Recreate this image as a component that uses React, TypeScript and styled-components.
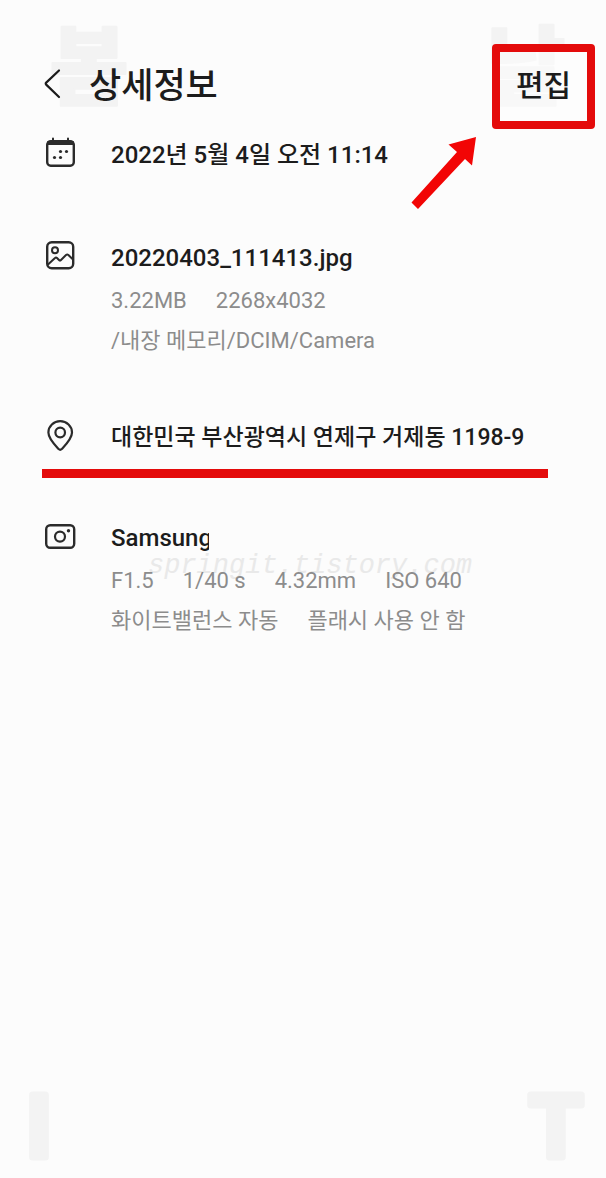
import React from 'react';
import styled, { createGlobalStyle } from 'styled-components';

const GlobalStyle = createGlobalStyle`
  * { box-sizing: border-box; }
  body {
    margin: 0;
    background: #fcfcfc;
    color: #1c1c1c;
    font-family: Roboto, "Noto Sans CJK KR", sans-serif;
  }
`;

const Page = styled.main`
  position: relative;
  isolation: isolate;
  min-height: 100vh;
  padding-top: 44px;
`;

const Watermark = styled.div`
  position: absolute;
  inset: 0;
  z-index: -1;
  display: flex;
  flex-direction: column;
  justify-content: space-between;
  padding: 26px 21px 18px 30px;
  pointer-events: none;
`;

const WatermarkRow = styled.div<{ $inset?: number }>`
  display: flex;
  justify-content: space-between;
  padding: 0 ${(p) => p.$inset ?? 0}px;
`;

const Glyph = styled.svg<{ $size: number; $weight: number; $round: number }>`
  overflow: visible;
  fill: #f3f3f3;
  stroke: #f3f3f3;
  stroke-width: ${(p) => p.$round};
  stroke-linejoin: round;
  font-size: ${(p) => p.$size}px;
  font-weight: ${(p) => p.$weight};
  text-anchor: middle;
`;

const Header = styled.header`
  position: relative;
  display: flex;
  align-items: center;
  height: 85px;
  padding: 0 11px 0 42px;
`;

const BackButton = styled.button`
  display: flex;
  padding: 0 0 6px;
  border: 0;
  background: none;
  color: inherit;
  cursor: pointer;
`;

const Title = styled.h1`
  flex: 1;
  margin: 0 0 0 23px;
  font-size: 35px;
  font-weight: 500;
  line-height: 48px;
`;

const EditButton = styled.button`
  width: 103px;
  height: 85px;
  padding: 0 0 8px;
  border: 8px solid #e40b0b;
  border-radius: 4px;
  background: rgba(255, 255, 255, 0.4);
  color: inherit;
  font-family: inherit;
  font-size: 30px;
  font-weight: 500;
  cursor: pointer;
`;

const Arrow = styled.svg`
  position: absolute;
  top: 92px;
  right: 129px;
  width: 66px;
  height: 74px;
`;

const List = styled.ul`
  margin: 0;
  padding: 8px 58px 0 42px;
  list-style: none;
`;

const Item = styled.li<{ $gap: number; $marked?: boolean }>`
  position: relative;
  display: flex;
  gap: 33px;
  margin-bottom: ${(p) => p.$gap}px;
  padding-bottom: ${(p) => (p.$marked ? 13 : 0)}px;
  border-bottom: ${(p) => (p.$marked ? '9px solid #e40b0b' : '0')};
`;

const Icon = styled.svg`
  flex: none;
  width: 36px;
  height: 32px;
  fill: none;
  stroke: #2b2b2b;
  stroke-width: 2.4;
  stroke-linecap: round;
  stroke-linejoin: round;
`;

const Primary = styled.h2<{ $size?: number }>`
  margin: 0;
  font-size: ${(p) => p.$size ?? 24}px;
  font-weight: 500;
  line-height: 36px;
  white-space: nowrap;
`;

const Device = styled(Primary)`
  width: 98px;
  overflow: hidden;
`;

const Details = styled.div`
  margin-top: 5px;
`;

const Line = styled.p`
  display: flex;
  gap: 29px;
  margin: 0;
  color: #8c8c8c;
  font-size: 22px;
  line-height: 40px;
  white-space: nowrap;
`;

const SiteMark = styled.span`
  position: absolute;
  z-index: -1;
  top: 29px;
  left: 106px;
  color: #e9e9e9;
  font: italic 27px/34px "Liberation Mono", monospace;
`;

export default function App() {
  return (
    <Page>
      <GlobalStyle />
      <Watermark aria-hidden="true">
        <WatermarkRow $inset={20}>
          <Glyph $size={86} $weight={900} $round={2} width="78" height="80">
            <text x="39" y="72">봄</text>
          </Glyph>
          <Glyph $size={86} $weight={900} $round={2} width="78" height="80">
            <text x="39" y="72">날</text>
          </Glyph>
        </WatermarkRow>
        <WatermarkRow>
          <Glyph $size={87} $weight={700} $round={7} width="18" height="69">
            <text x="9" y="66">I</text>
          </Glyph>
          <Glyph $size={87} $weight={700} $round={7} width="57" height="69">
            <text x="28" y="66">T</text>
          </Glyph>
        </WatermarkRow>
      </Watermark>

      <Header>
        <BackButton aria-label="뒤로">
          <svg width="24" height="32" viewBox="0 0 24 32" fill="none" stroke="#1c1c1c" strokeWidth="2.2" strokeLinecap="round" strokeLinejoin="round">
            <path d="M17 2.500 4.200 14.600q-1 1 0 2L17 29" />
          </svg>
        </BackButton>
        <Title>상세정보</Title>
        <EditButton>편집</EditButton>
        <Arrow viewBox="0 0 66 74" aria-hidden="true">
          <path d="M65 1 61 29.500 54 23 7 73 0.500 66.500 46 16 37.500 8.500Z" fill="#f20505" />
        </Arrow>
      </Header>

      <List>
        <Item $gap={67}>
          <Icon viewBox="0 0 36 32" aria-hidden="true">
            <rect x="5.200" y="4.200" width="26.600" height="24.600" rx="3.500" />
            <path d="M6 5h25v2H6zM11 1.500v3M26 1.500v3" strokeWidth="2" fill="#2b2b2b" />
            <g fill="#2b2b2b" stroke="none">
              <circle cx="18.500" cy="14.500" r="1.600" />
              <circle cx="24.500" cy="14.500" r="1.600" />
              <circle cx="12.500" cy="20.500" r="1.600" />
              <circle cx="18.500" cy="20.500" r="1.600" />
            </g>
          </Icon>
          <Primary>2022년 5월 4일 오전 11:14</Primary>
        </Item>

        <Item $gap={59}>
          <Icon viewBox="0 0 36 32" aria-hidden="true">
            <rect x="5.200" y="2.200" width="26" height="26" rx="4.500" />
            <circle cx="13" cy="10.200" r="3" strokeWidth="2" />
            <path d="M6 24.500 13 18q1-1 2 0l2 2q1 1 2 0l5-5q1.200-1 2.400 0l4.600 4.500" strokeWidth="2" />
          </Icon>
          <div>
            <Primary>20220403_111413.jpg</Primary>
            <Details>
              <Line>
                <span>3.22MB</span>
                <span>2268x4032</span>
              </Line>
              <Line>/내장 메모리/DCIM/Camera</Line>
            </Details>
          </div>
        </Item>

        <Item $gap={42} $marked>
          <Icon viewBox="0 0 36 32" aria-hidden="true">
            <path d="M16.600 29q1.600 1.500 3.200 0C24 24.500 30 18.500 30 12.500a11.800 11.300 0 0 0-23.600 0C6.400 18.500 12.400 24.500 16.600 29Z" strokeWidth="2.200" />
            <circle cx="18.200" cy="12.500" r="4.800" strokeWidth="2.200" />
          </Icon>
          <Primary $size={23}>대한민국 부산광역시 연제구 거제동 1198-9</Primary>
        </Item>

        <Item $gap={0}>
          <Icon viewBox="0 0 36 32" aria-hidden="true">
            <rect x="4.200" y="5.200" width="28" height="22.600" rx="4" />
            <circle cx="18" cy="16.600" r="5" strokeWidth="2.200" />
            <circle cx="26.500" cy="10.800" r="1.700" fill="#2b2b2b" stroke="none" />
          </Icon>
          <SiteMark aria-hidden="true">springit.tistory.com</SiteMark>
          <div>
            <Device>Samsung</Device>
            <Details>
              <Line>
                <span>F1.5</span>
                <span>1/40 s</span>
                <span>4.32mm</span>
                <span>ISO 640</span>
              </Line>
              <Line>
                <span>화이트밸런스 자동</span>
                <span>플래시 사용 안 함</span>
              </Line>
            </Details>
          </div>
        </Item>
      </List>
    </Page>
  );
}
